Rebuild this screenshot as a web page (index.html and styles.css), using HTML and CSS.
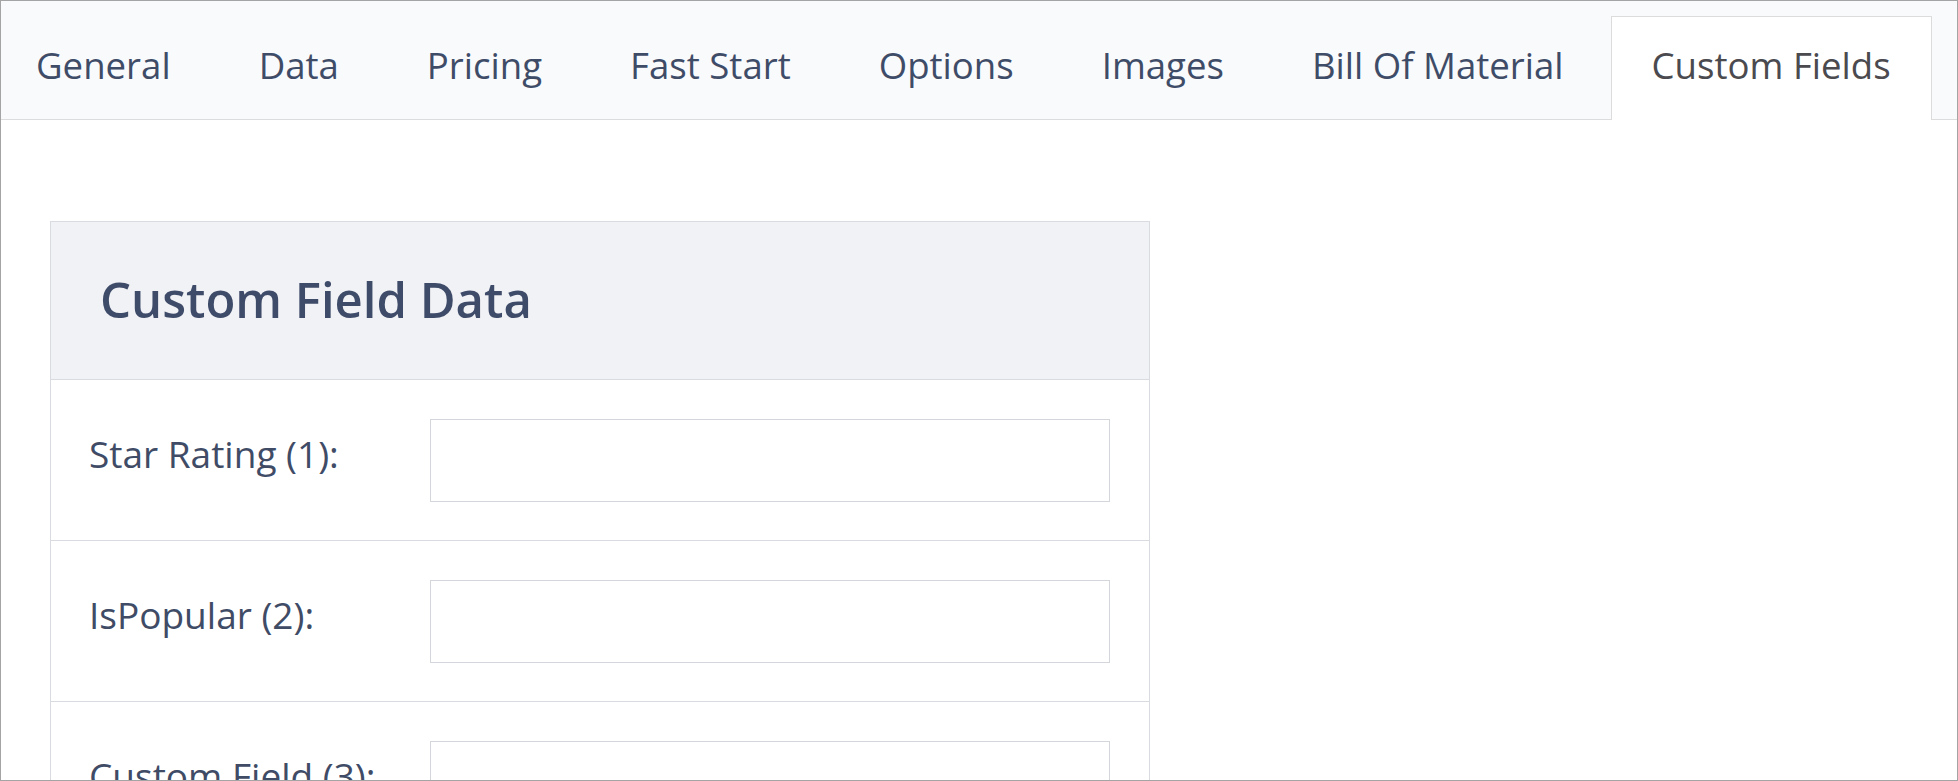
FILE: index.html
```html
<!DOCTYPE html>
<html>
<head>
<meta charset="utf-8">
<link rel="stylesheet" href="styles.css">
</head>
<body>
<div class="frame">
  <nav class="tabbar">
    <div class="tab">General</div>
    <div class="tab">Data</div>
    <div class="tab">Pricing</div>
    <div class="tab">Fast Start</div>
    <div class="tab">Options</div>
    <div class="tab">Images</div>
    <div class="tab">Bill Of Material</div>
    <div class="tab active">Custom Fields</div>
  </nav>
  <main class="content">
    <section class="panel">
      <header class="panel-head"><h2 class="panel-title">Custom Field Data</h2></header>
      <div class="row">
        <label class="row-label">Star Rating (1):</label>
        <input class="row-input" type="text">
      </div>
      <div class="row">
        <label class="row-label">IsPopular (2):</label>
        <input class="row-input" type="text">
      </div>
      <div class="row">
        <label class="row-label">Custom Field (3):</label>
        <input class="row-input" type="text">
      </div>
    </section>
  </main>
</div>
</body>
</html>
```
FILE: styles.css
```css
html, body {
  margin: 0;
  padding: 0;
  background: #ffffff;
}
body {
  font-family: "Open Sans", "DejaVu Sans", sans-serif;
}
.frame {
  box-sizing: border-box;
  width: 1958px;
  height: 781px;
  border: 1px solid #a4a4a4;
  overflow: hidden;
  background: #ffffff;
}
.tabbar {
  display: flex;
  align-items: flex-end;
  height: 119px;
  box-sizing: border-box;
  background: #f9fafc;
  border-bottom: 1px solid #dcdcdc;
  padding-left: 0;
}
.tab {
  box-sizing: border-box;
  height: 104px;
  padding: 24px 40px 0;
  margin-bottom: -1px;
  border: 1px solid transparent;
  border-bottom: none;
  font-size: 36.6px;
  line-height: 48px;
  color: #3f4c68;
  white-space: nowrap;
}
.tab + .tab {
  margin-left: 6px;
}
.tab:first-child {
  padding-left: 34px;
}
.tab.active {
  background: #ffffff;
  border-color: #dcdcdc;
  color: #4a4a4f;
}
.content {
  padding: 101px 0 0 49px;
}
.panel {
  box-sizing: border-box;
  width: 1100px;
  border: 1px solid #d8dbe0;
  border-bottom: none;
}
.panel-head {
  box-sizing: border-box;
  height: 158px;
  background: #f1f2f5;
  border-bottom: 1px solid #d8dbe0;
  display: flex;
  align-items: center;
  padding: 0 0 3px 49px;
}
.panel-title {
  margin: 0;
  font-size: 49px;
  font-weight: 600;
  color: #3e4b69;
  line-height: 1.2;
}
.row {
  display: flex;
  align-items: center;
  padding: 39px 38px 38px 38px;
  border-bottom: 1px solid #d8dbe0;
}
.row-label {
  width: 341px;
  flex: none;
  font-size: 37px;
  color: #404b66;
  padding-bottom: 14px;
}
.row-input {
  box-sizing: border-box;
  width: 680px;
  height: 83px;
  border: 1px solid #d3d6db;
  background: #ffffff;
  margin: 0;
  padding: 0 12px;
  outline: none;
}
```
